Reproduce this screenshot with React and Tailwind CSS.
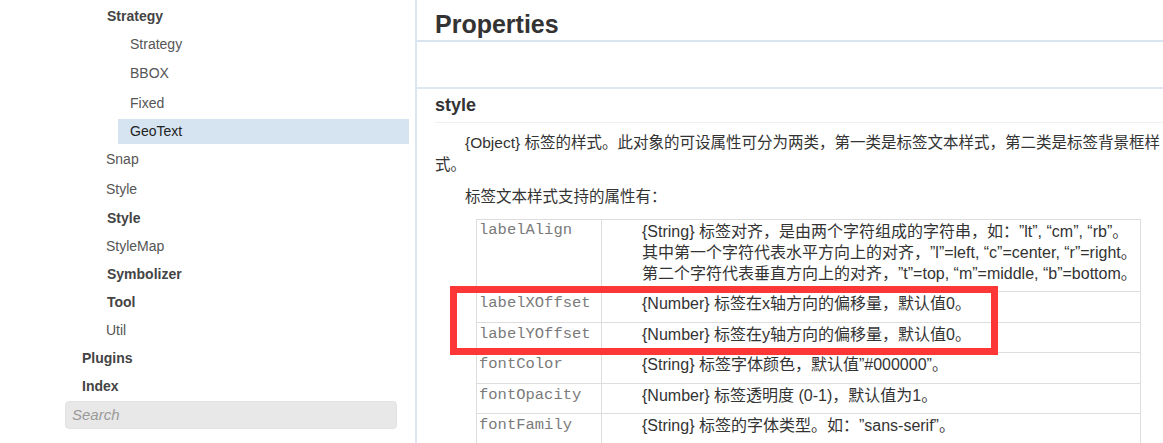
import React from "react";

const sans = { fontFamily: '"Liberation Sans", "Noto Sans CJK SC", sans-serif' };

const navItems = [
  { t: "Strategy", pl: "pl-[107px]", h: "h-[27px]", b: true },
  { t: "Strategy", pl: "pl-[130px]", h: "h-[28px]" },
  { t: "BBOX", pl: "pl-[130px]", h: "h-[30px]" },
  { t: "Fixed", pl: "pl-[130px]", h: "h-[31px]" },
  { t: "GeoText", active: true },
  { t: "Snap", pl: "pl-[106px]", h: "h-[31px]" },
  { t: "Style", pl: "pl-[106px]", h: "h-[29px]" },
  { t: "Style", pl: "pl-[107px]", h: "h-[29px]", b: true },
  { t: "StyleMap", pl: "pl-[106px]", h: "h-[27px]" },
  { t: "Symbolizer", pl: "pl-[107px]", h: "h-[29px]", b: true },
  { t: "Tool", pl: "pl-[107px]", h: "h-[27px]", b: true },
  { t: "Util", pl: "pl-[106px]", h: "h-[28px]" },
  { t: "Plugins", pl: "pl-[82px]", h: "h-[29px]", b: true },
  { t: "Index", pl: "pl-[82px]", h: "h-[27px]", b: true },
];

const rows = [
  {
    k: "labelAlign",
    first: true,
    v: [
      "{String} 标签对齐，是由两个字符组成的字符串，如：”lt”, “cm”, “rb”。",
      "其中第一个字符代表水平方向上的对齐，”l”=left, “c”=center, “r”=right。",
      "第二个字符代表垂直方向上的对齐，”t”=top, “m”=middle, “b”=bottom。",
    ],
  },
  { k: "labelXOffset", v: ["{Number} 标签在x轴方向的偏移量，默认值0。"] },
  { k: "labelYOffset", v: ["{Number} 标签在y轴方向的偏移量，默认值0。"] },
  { k: "fontColor", v: ["{String} 标签字体颜色，默认值”#000000”。"] },
  { k: "fontOpacity", v: ["{Number} 标签透明度 (0-1)，默认值为1。"] },
  { k: "fontFamily", v: ["{String} 标签的字体类型。如：”sans-serif”。"] },
];

export default function App() {
  return (
    <div
      className="relative flex h-[443px] w-[1163px] overflow-hidden bg-white [text-spacing-trim:space-all]"
      style={sans}
    >
      {/* Sidebar */}
      <div className="w-[417px] shrink-0 border-r-2 border-[#dce6f1] pt-[3px]">
        {navItems.map((it, i) =>
          it.active ? (
            <div
              key={i}
              className="ml-[118px] mr-[6px] flex h-[25px] items-center bg-[#d6e3f0] pl-[12px] text-[14px] text-[#222]"
            >
              {it.t}
            </div>
          ) : (
            <div
              key={i}
              className={`flex items-center text-[14px] ${it.pl} ${it.h} ${
                it.b ? "font-bold text-[#444]" : "text-[#555]"
              }`}
            >
              {it.t}
            </div>
          )
        )}
        <div className="ml-[65px] mt-[1px] flex h-[28px] w-[332px] items-center rounded-[4px] border border-[#e2e2e2] bg-[#e8e8e8] pl-[6px] text-[15px] italic text-[#9a9a9a]">
          Search
        </div>
      </div>

      {/* Main */}
      <div className="flex-1 text-[#333]">
        <div className="border-b-2 border-[#d8e4f0] pl-[18px] pt-[10px] pb-[2px]">
          <div className="text-[25px] font-bold leading-[28px]">Properties</div>
        </div>
        <div className="h-[47px] border-b-2 border-[#dde8f3]"></div>
        <div className="ml-[18px]">
          <div className="mt-[6px] border-b border-[#eeeeee] pb-[7px] text-[18px] font-bold leading-[20px]">
            style
          </div>
          <div className="mt-[9px] text-[15.5px] leading-[22px] whitespace-nowrap">
            <div className="pl-[30px]">
              {"{Object} 标签的样式。此对象的可设属性可分为两类，第一类是标签文本样式，第二类是标签背景框样"}
            </div>
            <div>式。</div>
          </div>
          <div className="mt-[10px] pl-[30px] text-[15.5px] leading-[22px]">标签文本样式支持的属性有：</div>

          <div className="ml-[41px] mt-[11px] w-[665px] border-l border-r border-t border-[#dddddd]">
            {rows.map((r) => (
              <div key={r.k} className="flex border-b border-[#dddddd]">
                <div
                  className={`w-[125px] shrink-0 border-r border-[#dddddd] pl-[2px] text-[15.5px] leading-[21px] text-[#7a7a7a] ${
                    r.first ? "pt-[0px]" : "pt-[1px]"
                  }`}
                  style={{ fontFamily: '"Liberation Mono", "Courier New", monospace' }}
                >
                  {r.k}
                </div>
                <div
                  className={`flex-1 whitespace-nowrap pl-[40px] text-[16px] leading-[21px] text-[#333] ${
                    r.first ? "pt-[0.5px] pb-[7.5px]" : "pt-[1px] pb-[7.5px]"
                  }`}
                >
                  {r.v.map((line, i) => (
                    <div key={i}>{line}</div>
                  ))}
                </div>
              </div>
            ))}
          </div>
        </div>
      </div>

      {/* Red annotation box */}
      <div className="pointer-events-none absolute left-[450px] top-[286px] h-[69px] w-[548px] border-[7px] border-[#fd3636]"></div>
    </div>
  );
}
